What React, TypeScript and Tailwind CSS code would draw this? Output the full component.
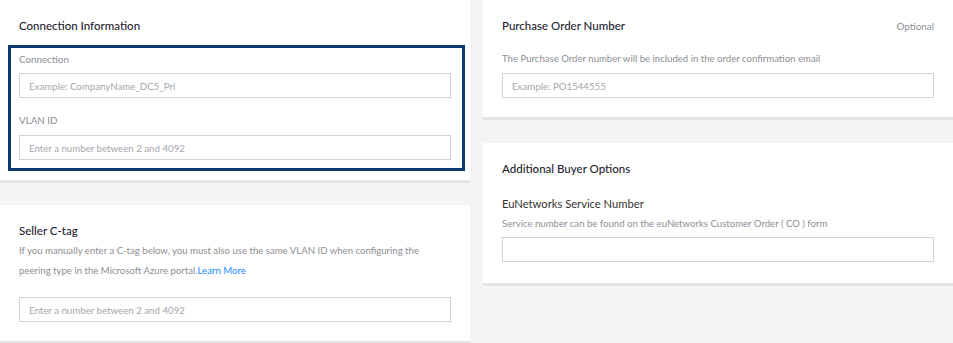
import React from "react";

const font = { fontFamily: "Lato, 'Open Sans', sans-serif" };

function TextInput({ placeholder }: { placeholder?: string }) {
    return (
        <input
            type="text"
            placeholder={placeholder}
            className="block w-full h-[25px] border border-[#cfd3da] bg-white px-[9px] text-[9.7px] text-[#333] placeholder:text-[#a3a7ae] focus:outline-none"
        />
    );
}

export default function App() {
    return (
        <div className="w-[953px] h-[343px] overflow-hidden bg-[#f3f4f6] text-[#222]" style={font}>
            <div className="grid grid-cols-[470px_470px] gap-x-[13px]">
                {/* left column */}
                <div className="flex flex-col gap-[22px]">
                    <div className="bg-white border-b-[3px] border-[#e3e5e9] h-[183px] pt-[18px]">
                        <h2 className="px-[19px] text-[11.5px] font-medium leading-[16px] text-[#1e2430]">Connection Information</h2>
                        <div className="mt-[11px] ml-[8px] w-[457px] border-[3px] border-[#0b3a72] pl-[8px] pr-[11px] pt-[4px] pb-[8px]">
                            <label className="block text-[9.8px] leading-[14px] text-[#8c8f94]">Connection</label>
                            <div className="mt-[7px]">
                                <TextInput placeholder="Example: CompanyName_DC5_Pri" />
                            </div>
                            <label className="block mt-[15px] text-[9.8px] leading-[14px] text-[#8c8f94]">VLAN ID</label>
                            <div className="mt-[8px]">
                                <TextInput placeholder="Enter a number between 2 and 4092" />
                            </div>
                        </div>
                    </div>

                    <div className="bg-white border-b-[3px] border-[#e3e5e9] h-[139px] px-[19px] pt-[18px]">
                        <h2 className="text-[11.5px] font-medium leading-[16px] text-[#1e2430]">Seller C-tag</h2>
                        <p className="mt-[2px] w-[410px] text-[9.6px] leading-[19.5px] text-[#8c8f94]">
                            If you manually enter a C-tag below, you must also use the same VLAN ID when configuring the peering type in the Microsoft Azure portal.<a className="text-[#1a8cff]">Learn More</a>
                        </p>
                        <div className="mt-[17px]">
                            <TextInput placeholder="Enter a number between 2 and 4092" />
                        </div>
                    </div>
                </div>

                {/* right column */}
                <div className="flex flex-col gap-[23px]">
                    <div className="bg-white border-b-[3px] border-[#e3e5e9] h-[120px] px-[19px] pt-[18px]">
                        <div className="flex items-center justify-between">
                            <h2 className="text-[11.5px] font-medium leading-[16px] text-[#1e2430]">Purchase Order Number</h2>
                            <span className="text-[9.8px] text-[#8c8f94]">Optional</span>
                        </div>
                        <p className="mt-[18px] text-[9.6px] leading-[14px] text-[#8c8f94]">
                            The Purchase Order number will be included in the order confirmation email
                        </p>
                        <div className="mt-[7px]">
                            <TextInput placeholder="Example: PO1544555" />
                        </div>
                    </div>

                    <div className="bg-white border-b-[3px] border-[#e3e5e9] h-[143px] px-[19px] pt-[18px]">
                        <h2 className="text-[11.5px] font-medium leading-[16px] text-[#1e2430]">Additional Buyer Options</h2>
                        <div className="mt-[19px] text-[11.2px] leading-[16px] text-[#333]">EuNetworks Service Number</div>
                        <p className="mt-[5px] text-[9.6px] leading-[14px] text-[#8c8f94]">
                            Service number can be found on the euNetworks Customer Order ( CO ) form
                        </p>
                        <div className="mt-[6px]">
                            <TextInput />
                        </div>
                    </div>
                </div>
            </div>
        </div>
    );
}
